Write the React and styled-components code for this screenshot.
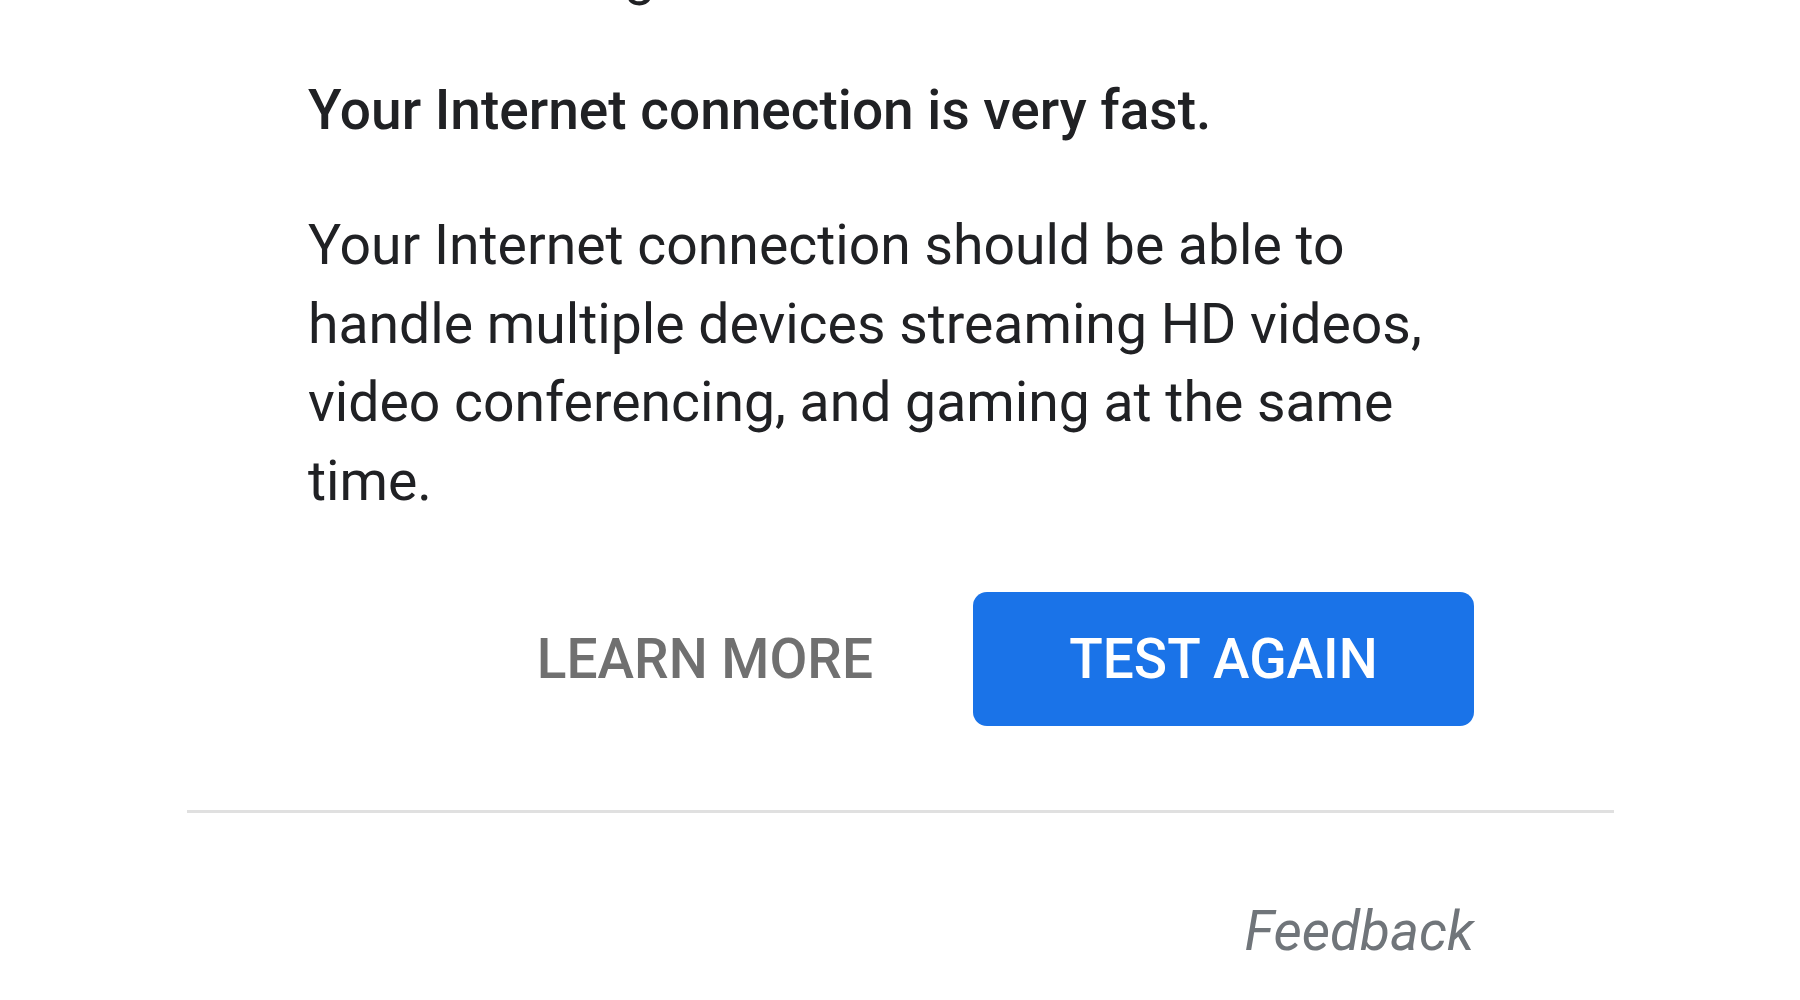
import React from "react";
import styled, { createGlobalStyle } from "styled-components";

const GlobalStyle = createGlobalStyle`
  html, body {
    margin: 0;
    padding: 0;
    background: #ffffff;
  }
  body {
    font-family: Roboto, "Noto Sans", "Liberation Sans", sans-serif;
    -webkit-font-smoothing: antialiased;
  }
`;

export default function App() {
  return (
    <>
      <GlobalStyle />
      <Page>
        <Card>
          <Content>
            <PrevLine>Internet strong</PrevLine>
            <Title>Your Internet connection is very fast.</Title>
            <Body>
              Your Internet connection should be able to handle multiple
              devices streaming HD videos, video conferencing, and gaming at
              the same time.
            </Body>
            <Actions>
              <TextButton>Learn more</TextButton>
              <PrimaryButton>Test again</PrimaryButton>
            </Actions>
          </Content>
          <Divider />
          <Footer>
            <FeedbackLink>Feedback</FeedbackLink>
          </Footer>
        </Card>
      </Page>
    </>
  );
}

const Page = styled.main`
  width: 1800px;
  height: 1000px;
  overflow: hidden;
  background: #ffffff;
`;

const Card = styled.section`
  margin-left: 187px;
  width: 1427px;
`;

const Content = styled.div`
  padding: 0 140px 0 121px;
  display: flex;
  flex-direction: column;
`;

/* tail of the previous result line, scrolled mostly out of view */
const PrevLine = styled.div`
  height: 0;
  font-size: 55px;
  line-height: 0;
  color: #202124;
  transform: translate(-12px, -25px);
`;

const Title = styled.h1`
  margin: 70px 0 0;
  font-size: 55px;
  font-weight: 500;
  line-height: 80px;
  color: #202124;
`;

const Body = styled.p`
  margin: 57px 0 0;
  font-size: 55.3px;
  font-weight: 400;
  line-height: 78.5px;
  color: #202124;
`;

const Actions = styled.div`
  margin-top: 71px;
  display: flex;
  justify-content: flex-end;
  align-items: center;
`;

const ButtonBase = styled.button`
  font-family: inherit;
  font-size: 55px;
  font-weight: 500;
  text-transform: uppercase;
  line-height: normal;
  height: 134px;
  padding: 0 96px;
  border: none;
  border-radius: 14px;
  cursor: pointer;
`;

const TextButton = styled(ButtonBase)`
  background: transparent;
  color: #707070;
  padding: 0 100px;
`;

const PrimaryButton = styled(ButtonBase)`
  width: 501px;
  padding: 0;
  background: #1a73e8;
  color: #ffffff;
`;

const Divider = styled.hr`
  margin: 84px 0 0;
  height: 3px;
  border: none;
  background: #e0e0e0;
`;

const Footer = styled.div`
  display: flex;
  justify-content: flex-end;
  padding: 86px 140px 0 0;
`;

const FeedbackLink = styled.a`
  font-size: 55px;
  font-style: italic;
  line-height: normal;
  color: #70757a;
  cursor: pointer;
`;
